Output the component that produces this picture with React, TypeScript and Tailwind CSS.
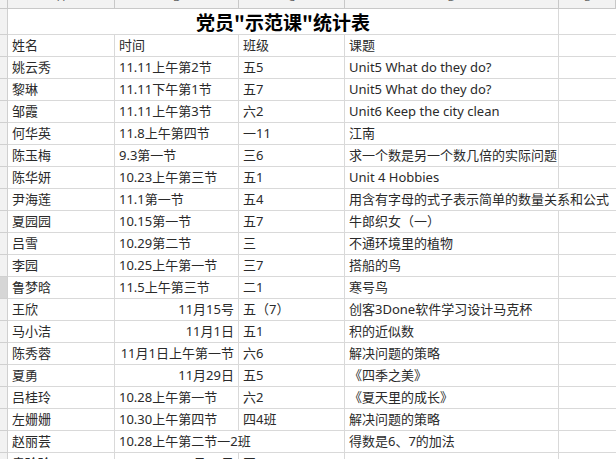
import React from 'react';

type Row = {
  name: string;
  time: string;
  cls: string;
  topic: string;
  timeRight?: boolean;
  timeOverflow?: boolean;
  topicOverflow?: boolean;
  selected?: boolean;
};

const rows: Row[] = [
  { name: '姓名', time: '时间', cls: '班级', topic: '课题' },
  { name: '姚云秀', time: '11.11上午第2节', cls: '五5', topic: 'Unit5 What do they do?' },
  { name: '黎琳', time: '11.11下午第1节', cls: '五7', topic: 'Unit5 What do they do?' },
  { name: '邹霞', time: '11.11上午第3节', cls: '六2', topic: 'Unit6 Keep the city clean' },
  { name: '何华英', time: '11.8上午第四节', cls: '一11', topic: '江南' },
  { name: '陈玉梅', time: '9.3第一节', cls: '三6', topic: '求一个数是另一个数几倍的实际问题' },
  { name: '陈华妍', time: '10.23上午第三节', cls: '五1', topic: 'Unit 4 Hobbies' },
  { name: '尹海莲', time: '11.1第一节', cls: '五4', topic: '用含有字母的式子表示简单的数量关系和公式', topicOverflow: true },
  { name: '夏园园', time: '10.15第一节', cls: '五7', topic: '牛郎织女（一）' },
  { name: '吕雪', time: '10.29第二节', cls: '三', topic: '不通环境里的植物' },
  { name: '李园', time: '10.25上午第一节', cls: '三7', topic: '搭船的鸟' },
  { name: '鲁梦晗', time: '11.5上午第三节', cls: '二1', topic: '寒号鸟', selected: true },
  { name: '王欣', time: '11月15号', cls: '五（7）', topic: '创客3Done软件学习设计马克杯', timeRight: true },
  { name: '马小洁', time: '11月1日', cls: '五1', topic: '积的近似数', timeRight: true },
  { name: '陈秀蓉', time: '11月1日上午第一节', cls: '六6', topic: '解决问题的策略', timeRight: true },
  { name: '夏勇', time: '11月29日', cls: '五5', topic: '《四季之美》', timeRight: true },
  { name: '吕桂玲', time: '10.28上午第一节', cls: '六2', topic: '《夏天里的成长》' },
  { name: '左姗姗', time: '10.30上午第四节', cls: '四4班', topic: '解决问题的策略' },
  { name: '赵丽芸', time: '10.28上午第二节一2班', cls: '', topic: '得数是6、7的加法', timeOverflow: true },
  { name: '袁玲玲', time: '11月15日', cls: '四1', topic: '', timeRight: true },
];

const cell = 'h-[22px] border-b border-r border-[#d9d9d9] pl-1 pr-1 leading-[21px] whitespace-nowrap';

function App() {
  return (
    <div
      className="h-[459px] w-[616px] overflow-hidden bg-white text-[13px] text-[#2a2a2a]"
      style={{ fontFamily: '"Noto Sans", "Noto Sans CJK SC", sans-serif' }}
    >
      <div className="grid grid-cols-[8px_107px_124px_106px_214px_1fr]">
        {/* column letters, mostly scrolled out of view */}
        <div className="h-[9px] border-b border-r border-[#c8c8c8] bg-[#f2f2f2]" />
        {['A', 'B', 'C', 'D', 'E'].map((l) => (
          <div
            key={l}
            className="h-[9px] overflow-hidden border-b border-r border-[#c8c8c8] bg-[#f2f2f2] text-center text-[11px] leading-[12px] text-[#666]"
          >
            <div className="-mt-[9px]">{l}</div>
          </div>
        ))}

        {/* title */}
        <div className="h-[26px] border-b border-r border-[#d0d0d0] bg-[#f2f2f2]" />
        <div
          className="col-span-4 h-[26px] border-b border-r border-[#d9d9d9] text-center text-[19px] font-bold leading-[25px] text-black"
          style={{ fontFamily: '"Noto Sans CJK SC", sans-serif' }}
        >
          党员"示范课"统计表
        </div>
        <div className="h-[26px] border-b border-[#d9d9d9]" />

        {rows.map((r, i) => (
          <React.Fragment key={i}>
            <div
              className={
                'h-[22px] border-b border-r border-[#d0d0d0] ' +
                (r.selected ? 'bg-[#d6d6d6]' : 'bg-[#f2f2f2]')
              }
            />
            <div className={cell}>{r.name}</div>
            <div
              className={
                'h-[22px] border-b border-[#d9d9d9] pl-1 pr-1 leading-[21px] whitespace-nowrap ' +
                (r.timeOverflow ? '' : 'border-r ') +
                (r.timeRight ? 'text-right' : '')
              }
            >
              {r.time}
            </div>
            <div className={cell}>{r.cls}</div>
            <div
              className={
                'h-[22px] border-b border-[#d9d9d9] pl-1 pr-1 leading-[21px] whitespace-nowrap ' +
                (r.topicOverflow ? '' : 'border-r')
              }
            >
              {r.topic}
            </div>
            <div className="h-[22px] border-b border-[#d9d9d9]" />
          </React.Fragment>
        ))}
      </div>
    </div>
  );
}

export default App;
